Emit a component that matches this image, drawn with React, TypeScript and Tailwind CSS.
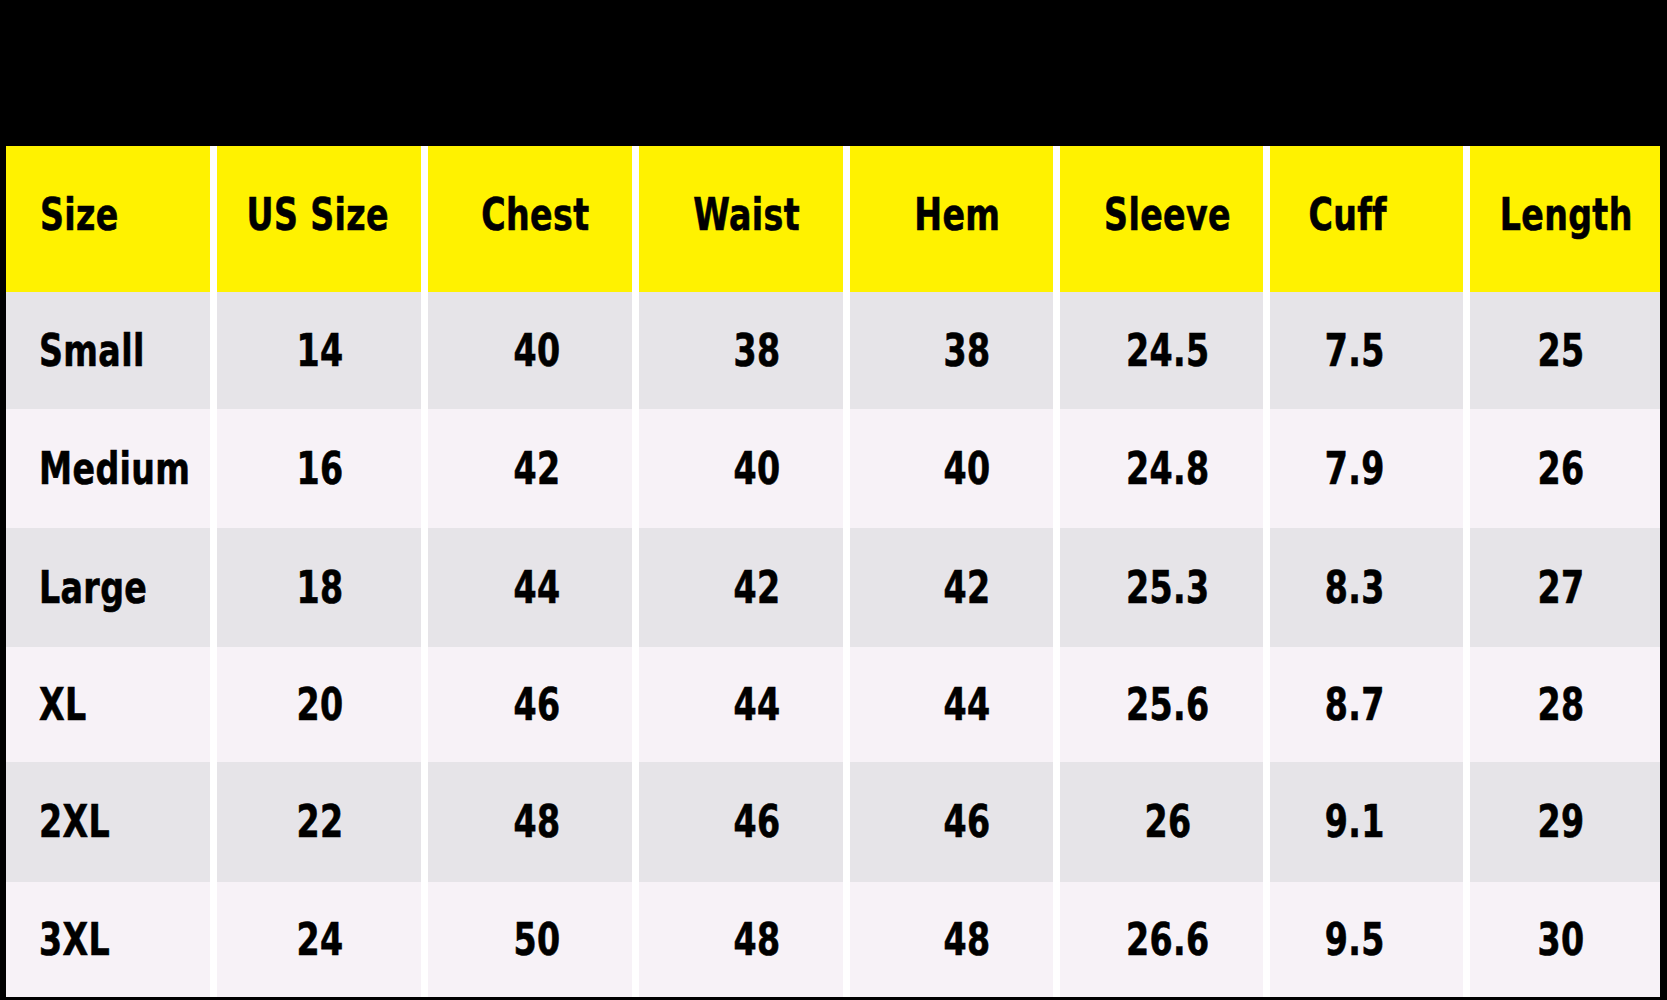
const headers = ['Size', 'US Size', 'Chest', 'Waist', 'Hem', 'Sleeve', 'Cuff', 'Length'];

const rows = [
    ['Small', '14', '40', '38', '38', '24.5', '7.5', '25'],
    ['Medium', '16', '42', '40', '40', '24.8', '7.9', '26'],
    ['Large', '18', '44', '42', '42', '25.3', '8.3', '27'],
    ['XL', '20', '46', '44', '44', '25.6', '8.7', '28'],
    ['2XL', '22', '48', '46', '46', '26', '9.1', '29'],
    ['3XL', '24', '50', '48', '48', '26.6', '9.5', '30'],
];

// horizontal nudges so the text sits where it does in the chart
const headerAlign = [
    'justify-start pl-[34px]',
    'justify-center pr-[2px]',
    'justify-center pl-[10px]',
    'justify-center pl-[12px]',
    'justify-center pl-[12px]',
    'justify-center pl-[12px]',
    'justify-center pr-[38px]',
    'justify-center pl-[2px]',
];

const cellAlign = [
    'justify-start pl-[33px]',
    'justify-center pl-[2px]',
    'justify-center pl-[14px]',
    'justify-center pl-[32px]',
    'justify-center pl-[30px]',
    'justify-center pl-[12px]',
    'justify-center pr-[24px]',
    'justify-center pr-[8px]',
];

const Label = ({ text, first }: { text: string; first: boolean }) => (
    <span
        className={`inline-block whitespace-nowrap scale-x-[0.84] [-webkit-text-stroke:0.6px_black] ${
            first ? 'origin-left' : 'origin-center'
        }`}
    >
        {text}
    </span>
);

const App = () => {
    return (
        <div className="w-[1667px] h-[1000px] bg-black pt-[146px] pl-[6px] pr-[7px] pb-[3px] overflow-hidden">
            <div
                className="grid bg-white gap-x-[7px] grid-cols-[204px_204px_204px_204px_203px_203px_193px_190px] grid-rows-[146px_117px_119px_119px_115px_120px_115px] text-black font-bold text-[44px] tracking-[0.01em] leading-none"
                style={{ fontFamily: '"DejaVu Sans Condensed", "DejaVu Sans", sans-serif' }}
            >
                {/* Header */}
                {headers.map((h, i) => (
                    <div key={h} className={`bg-[#fff200] flex items-center pb-[8px] ${headerAlign[i]}`}>
                        <Label text={h} first={i === 0} />
                    </div>
                ))}

                {/* Body rows */}
                {rows.map((row, r) =>
                    row.map((val, c) => (
                        <div
                            key={`${r}-${c}`}
                            className={`flex items-center ${r % 2 === 0 ? 'bg-[#e6e4e8]' : 'bg-[#f7f2f7]'} ${cellAlign[c]}`}
                        >
                            <Label text={val} first={c === 0} />
                        </div>
                    ))
                )}
            </div>
        </div>
    );
};

export default App;
